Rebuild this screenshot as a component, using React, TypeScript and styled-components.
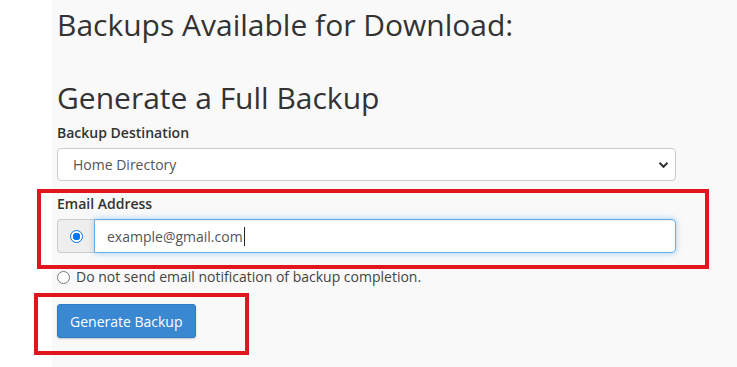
import React from "react";
import styled, { createGlobalStyle } from "styled-components";

const GlobalStyle = createGlobalStyle`
  html, body {
    margin: 0;
    padding: 0;
    background: #ffffff;
    font-family: "Open Sans", "Liberation Sans", sans-serif;
    color: #333;
  }
  * {
    box-sizing: border-box;
  }
`;

function App() {
  return (
    <>
      <GlobalStyle />
      <Page>
        <Panel>
          <Title>Backups Available for Download:</Title>
          <Title $gap>Generate a Full Backup</Title>
          <Field>
            <Label>Backup Destination</Label>
            <SelectBox>
              <span>Home Directory</span>
              <svg width="11" height="8" viewBox="0 0 11 8">
                <path d="M1.5 1.8 L5.5 5.8 L9.5 1.8" fill="none" stroke="#333" strokeWidth="2" />
              </svg>
            </SelectBox>
          </Field>
          <Field $top={13}>
            <Label>Email Address</Label>
            <InputGroup>
              <Addon>
                <Radio $checked />
              </Addon>
              <TextInput>
                example@gmail.com<Caret />
              </TextInput>
            </InputGroup>
          </Field>
          <OptionRow>
            <Radio />
            <span>Do not send email notification of backup completion.</span>
          </OptionRow>
          <Button>Generate Backup</Button>
        </Panel>
        <Highlight $x={37} $y={189} $w={672} $h={80} />
        <Highlight $x={34} $y={293} $w={215} $h={62} />
      </Page>
    </>
  );
}
export default App;

const Page = styled.div`
  position: relative;
  width: 737px;
  height: 367px;
  overflow: hidden;
  background: #ffffff;
`;

const Panel = styled.div`
  margin-left: 52px;
  height: 367px;
  background: #f9f9f9;
  padding: 3px 0 0 5px;
  width: 685px;
`;

const Title = styled.h1<{ $gap?: boolean }>`
  margin: ${(p) => (p.$gap ? "29px" : "0")} 0 0 0;
  font-size: 30px;
  font-weight: 400;
  line-height: 44px;
  color: #333;
`;

const Field = styled.div<{ $top?: number }>`
  margin-top: ${(p) => p.$top ?? 3}px;
  width: 619px;
`;

const Label = styled.div`
  font-size: 14px;
  font-weight: 600;
  line-height: 20px;
  margin-bottom: 5px;
  color: #333;
`;

const SelectBox = styled.div`
  height: 33px;
  border: 1px solid #ccc;
  border-radius: 4px;
  background: #fff;
  display: flex;
  align-items: center;
  justify-content: space-between;
  padding: 0 6px 0 15px;
  font-size: 14px;
  color: #555;
`;

const InputGroup = styled.div`
  display: flex;
  height: 34px;
`;

const Addon = styled.div`
  width: 37px;
  background: #eee;
  border: 1px solid #ccc;
  border-right: none;
  border-radius: 4px 0 0 4px;
  display: flex;
  align-items: center;
  justify-content: center;
`;

const TextInput = styled.div`
  flex: 1;
  background: #fff;
  border: 1px solid #66afe9;
  border-radius: 0 4px 4px 0;
  box-shadow: inset 0 1px 1px rgba(0, 0, 0, 0.075), 0 0 6px rgba(102, 175, 233, 0.6);
  display: flex;
  align-items: center;
  padding-left: 12px;
  font-size: 14px;
  color: #555;
`;

const Caret = styled.span`
  display: inline-block;
  width: 1px;
  height: 19px;
  background: #222;
  margin-left: 1px;
`;

const Radio = styled.span<{ $checked?: boolean }>`
  display: inline-block;
  width: 13px;
  height: 13px;
  border-radius: 50%;
  border: 1px solid ${(p) => (p.$checked ? "#0075ff" : "#767676")};
  background: ${(p) =>
    p.$checked ? "radial-gradient(circle, #0075ff 0 3.5px, #fff 4px)" : "#fff"};
  flex-shrink: 0;
`;

const OptionRow = styled.div`
  display: flex;
  align-items: center;
  gap: 6px;
  margin-top: 15px;
  font-size: 14px;
  color: #444;
  span:last-child {
    line-height: 18px;
  }
`;

const Button = styled.button`
  margin-top: 18px;
  height: 34px;
  padding: 0 12px;
  border: 1px solid #2f7bc6;
  border-radius: 3px;
  background: #3a87d2;
  color: #fff;
  font-family: "Open Sans", "Liberation Sans", sans-serif;
  font-size: 14px;
  box-shadow: 0 1px 2px rgba(0, 0, 0, 0.2);
`;

const Highlight = styled.div<{ $x: number; $y: number; $w: number; $h: number }>`
  position: absolute;
  left: ${(p) => p.$x}px;
  top: ${(p) => p.$y}px;
  width: ${(p) => p.$w}px;
  height: ${(p) => p.$h}px;
  border: 4px solid #e3151f;
  pointer-events: none;
`;
